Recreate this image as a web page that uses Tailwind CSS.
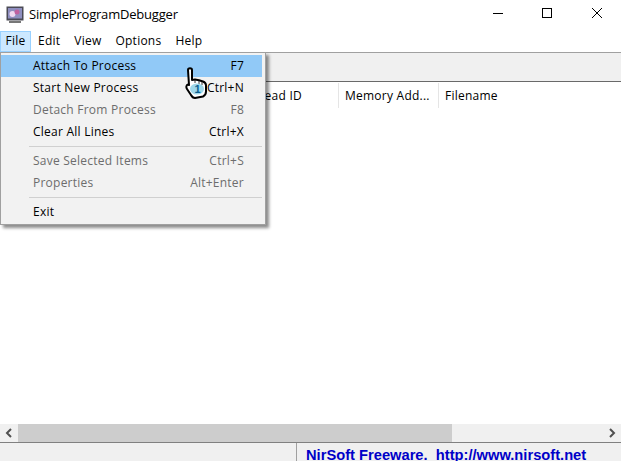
<!DOCTYPE html>
<html lang="en">
<head>
<meta charset="utf-8"/>
<title>SimpleProgramDebugger</title>
<script src="https://cdn.jsdelivr.net/npm/@tailwindcss/browser@4"></script>
</head>
<body class="relative w-[621px] h-[461px] overflow-hidden bg-white font-['Open_Sans',sans-serif] text-[12px] tracking-[0.24px] text-black">
  <div class="flex flex-col h-full">
    <!-- title bar -->
    <div class="h-[30px] flex items-center shrink-0">
      <svg class="ml-[6px] w-[18px] h-[18px]" viewBox="0 0 18 18">
        <rect x="0.5" y="0.5" width="17" height="14" fill="#4a4a55"/>
        <rect x="2" y="2" width="14" height="10.5" fill="#8f8fc0"/>
        <circle cx="6.5" cy="8" r="3" fill="#f0d8f0"/>
        <circle cx="11" cy="6" r="2.5" fill="#c060a0"/>
        <rect x="3" y="15" width="12" height="2" fill="#777"/>
      </svg>
      <span class="ml-[5px] text-[13px] tracking-[-0.2px]">SimpleProgramDebugger</span>
      <div class="ml-auto flex items-center">
        <svg class="w-[46px] h-[30px]" viewBox="0 0 46 30"><path d="M14 13.500h10" stroke="#000" fill="none"/></svg>
        <svg class="w-[46px] h-[30px]" viewBox="0 0 46 30"><rect x="17.500" y="8.500" width="9" height="9" stroke="#000" fill="none"/></svg>
        <svg class="w-[50px] h-[30px]" viewBox="0 0 50 30"><path d="M21 8l10 10M31 8l-10 10" stroke="#000" fill="none"/></svg>
      </div>
    </div>
    <!-- menu bar -->
    <div class="h-[22px] flex items-center shrink-0">
      <span class="h-[21px] w-[31px] flex items-center justify-center bg-[#cce8ff] border border-[#99d1ff]">File</span>
      <span class="ml-[7px]">Edit</span>
      <span class="ml-[14px]">View</span>
      <span class="ml-[14px]">Options</span>
      <span class="ml-[14px]">Help</span>
    </div>
    <!-- toolbar -->
    <div class="h-[30px] shrink-0 bg-[#f0f0f0] border-t border-t-[#a0a0a0] border-b border-b-[#696969]"></div>
    <!-- list header -->
    <div class="h-[26px] pt-[1px] shrink-0 flex items-center">
      <span class="w-[239px] border-r border-[#e5e5e5] h-[25px]"></span>
      <span class="w-[100px] h-[25px] pl-[6px] flex items-center border-r border-[#e5e5e5]">Thread ID</span>
      <span class="w-[100px] h-[25px] pl-[6px] flex items-center border-r border-[#e5e5e5] whitespace-nowrap overflow-hidden">Memory Add...</span>
      <span class="pl-[6px]">Filename</span>
    </div>
    <div class="flex-1"></div>
    <!-- scrollbar -->
    <div class="h-[18px] shrink-0 flex bg-[#f0f0f0]">
      <div class="w-[18px] flex items-center justify-center">
        <svg class="w-[8px] h-[10px]" viewBox="0 0 8 10"><path d="M6 1L2 5l4 4" stroke="#505050" stroke-width="2" fill="none"/></svg>
      </div>
      <div class="w-[434px] bg-[#cdcdcd]"></div>
      <div class="ml-auto w-[18px] flex items-center justify-center">
        <svg class="w-[8px] h-[10px]" viewBox="0 0 8 10"><path d="M2 1l4 4-4 4" stroke="#505050" stroke-width="2" fill="none"/></svg>
      </div>
    </div>
    <!-- status bar -->
    <div class="h-[19px] shrink-0 flex bg-[#f0f0f0] border-t border-t-[#808080] overflow-hidden">
      <div class="w-[297px] border-r border-[#a0a0a0]"></div>
      <div class="pl-[9px] pt-[3px] font-['Liberation_Sans',sans-serif] font-bold text-[14.700px] tracking-normal leading-[18px] text-[#0000c8] whitespace-pre">NirSoft Freeware.  http://www.nirsoft.net</div>
    </div>
  </div>

  <!-- File dropdown -->
  <div class="absolute left-0 top-[52px] w-[266px] h-[173px] pt-[2px] bg-[#f2f2f2] border border-[#a0a0a0] shadow-[3px_3px_3px_rgba(0,0,0,0.45)]">
    <div class="h-[22px] w-[261px] flex items-center justify-between pl-[32px] pr-[18px] bg-[#91c9f7]"><span>Attach To Process</span><span>F7</span></div>
    <div class="h-[22px] w-[261px] flex items-center justify-between pl-[32px] pr-[18px]"><span>Start New Process</span><span>Ctrl+N</span></div>
    <div class="h-[22px] w-[261px] flex items-center justify-between pl-[32px] pr-[18px] text-[#6d6d6d]"><span>Detach From Process</span><span>F8</span></div>
    <div class="h-[22px] w-[261px] flex items-center justify-between pl-[32px] pr-[18px]"><span>Clear All Lines</span><span>Ctrl+X</span></div>
    <div class="h-[7px] ml-[28px] mr-[3px] flex items-center"><div class="w-full h-px bg-[#d0d0d0]"></div></div>
    <div class="h-[22px] w-[261px] flex items-center justify-between pl-[32px] pr-[18px] text-[#6d6d6d]"><span>Save Selected Items</span><span>Ctrl+S</span></div>
    <div class="h-[22px] w-[261px] flex items-center justify-between pl-[32px] pr-[18px] text-[#6d6d6d]"><span>Properties</span><span>Alt+Enter</span></div>
    <div class="h-[7px] ml-[28px] mr-[3px] flex items-center"><div class="w-full h-px bg-[#d0d0d0]"></div></div>
    <div class="h-[22px] w-[261px] flex items-center pl-[32px]"><span>Exit</span></div>
  </div>

  <!-- hand cursor -->
  <div class="absolute left-[185px] top-[67px] w-[24px] h-[34px]">
    <svg class="w-full h-full" viewBox="0 0 24 34">
      <path d="M3 3c0-2.500 4-2.500 4 0v10l3-.5 4 .8 4 1.200c2 .8 3 2 3 4v6c0 2-1 4-3 5l-8 1.500c-2 0-3-1-4-3l-4-6c-1-1.500-1-4 1-4.500l1 .5z" fill="#fff" stroke="#000" stroke-width="2" stroke-linejoin="round"/>
      <path d="M10 13v3M14 14v3M17 15v3" stroke="#333" fill="none"/>
      <ellipse cx="12" cy="22" rx="7" ry="5.500" fill="#9fd8ea"/>
      <text x="9.500" y="26" font-family="Liberation Sans" font-weight="700" font-size="11" fill="#0a5f90" class="tracking-normal">1</text>
    </svg>
  </div>
</body>
</html>
